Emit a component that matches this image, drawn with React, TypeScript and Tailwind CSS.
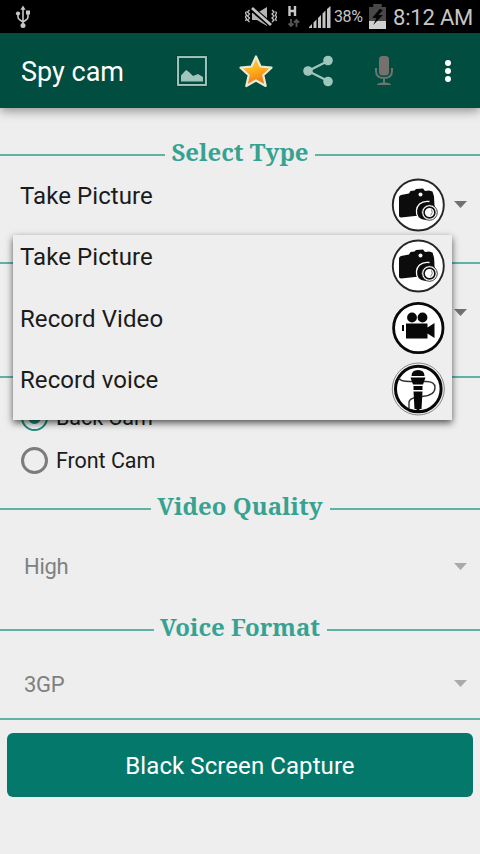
import React from 'react';

const UsbIcon = () => (
  <svg width="16" height="24" viewBox="0 0 16 24" fill="none" stroke="#c6c6c6" strokeWidth="1.6">
    <path d="M8 3v17M3 9v3q0 2 2 3l3 2 3-2q2-1 2-3V8" />
    <circle cx="8" cy="20.500" r="2.500" fill="#c6c6c6" stroke="none" />
    <circle cx="3" cy="8.500" r="2.100" fill="#c6c6c6" stroke="none" />
    <path d="M11 5.500h4v4h-4zM8 0.500l2.600 4.200H5.400z" fill="#c6c6c6" stroke="none" />
  </svg>
);

const MuteIcon = () => (
  <svg width="32" height="22" viewBox="0 0 32 22" fill="none" stroke="#c4c4c4">
    <path d="M7 7h5l10-6v19l-10-6H7z" fill="#b4b4b4" stroke="none" />
    <path d="M6 2l20 17" stroke="#000" strokeWidth="5.500" />
    <path d="M7 2l19 17" strokeWidth="2.800" />
    <path d="M4.500 4l-2 2 2 2-2 2 2 2-2 2 2 2M1.500 5.500L0.500 7l1 2-1 2 1 2-1 2M27 4l2 2-2 2 2 2-2 2 2 2-2 2M30.500 5.500l1 1.500-1 2 1 2-1 2 1 2" strokeWidth="1.300" />
  </svg>
);

const DataIcon = () => (
  <svg width="14" height="24" viewBox="0 0 14 24" fill="none" stroke="#c8c8c8">
    <path d="M2.500 1v10M8 1v10M2 6h6.500" strokeWidth="2.400" />
    <path d="M4 14v7M1.500 18.500L4 21l2.500-2.500M9.500 22v-7M7 17.500L9.500 15l2.500 2.500" stroke="#555" strokeWidth="1.800" />
  </svg>
);

const SignalIcon = () => (
  <svg width="22" height="22" viewBox="0 0 22 22" fill="#c4c4c4">
    <path d="M0 22v-1l3-3v4zM4.500 22v-5.500l3-3V22zM9 22V12l3-3v13zM13.500 22V7.500l3-3V22zM18 22V3l3.500-3v22z" />
  </svg>
);

const BatteryIcon = () => (
  <svg width="17" height="25" viewBox="0 0 16 25" preserveAspectRatio="none">
    <path d="M4 0h8v3h4v22H0V3h4z" fill="#484848" />
    <path d="M0 17h16v8H0z" fill="#d0d0d0" />
    <path d="M10 5L3 14h4l-3 7 9-10H9l4-5z" fill="#050505" />
  </svg>
);

const GalleryIcon = () => (
  <svg width="32" height="32" viewBox="0 0 32 32">
    <rect x="2" y="2" width="28" height="28" fill="none" stroke="#a0c5bd" strokeWidth="2" />
    <rect x="0.700" y="0.700" width="30.600" height="30.600" fill="none" stroke="#063b30" strokeWidth="0.700" />
    <path d="M5 26.500v-6l5-5.500 3 2 4 4 5-2 5 3v4.500z" fill="#a0c5bd" />
  </svg>
);

const StarIcon = () => (
  <svg width="34" height="34" viewBox="0 0 34 34">
    <defs>
      <linearGradient id="star" x1="0" y1="0" x2="0.300" y2="1">
        <stop offset="0" stopColor="#ffd44a" />
        <stop offset="0.500" stopColor="#ffb51c" />
        <stop offset="1" stopColor="#ee7818" />
      </linearGradient>
    </defs>
    <path d="M17 2.500l4.500 10 11 1.200-8.200 7.500 2.400 10.800L17 26.500 7.300 32l2.400-10.800L1.500 13.700l11-1.200z" fill="url(#star)" stroke="#e8ead8" strokeWidth="2.200" strokeLinejoin="round" />
  </svg>
);

const ShareIcon = () => (
  <svg width="30" height="32" viewBox="0 0 30 32" fill="#9fc6bd">
    <path d="M25 6L5 16l20 10" fill="none" stroke="#9fc6bd" strokeWidth="2.200" />
    <circle cx="25" cy="5.500" r="4.800" />
    <circle cx="5" cy="16" r="4.800" />
    <circle cx="25" cy="26.500" r="4.800" />
  </svg>
);

const MicIcon = () => (
  <svg width="20" height="30" viewBox="0 0 20 30" fill="none" stroke="#6b746f" strokeWidth="2">
    <rect x="5" y="0" width="10" height="19.500" rx="3.500" fill="#74716f" stroke="none" />
    <path d="M2 12v3q0 7 8 7t8-7v-3M10 22v5" />
    <path d="M3 29q0-2.500 7-2.500t7 2.500z" fill="#6b746f" stroke="none" />
  </svg>
);

const CameraIcon = () => (
  <svg width="54" height="54" viewBox="0 0 54 54">
    <circle cx="27.300" cy="27" r="25.500" fill="#fff" stroke="#262626" strokeWidth="1.900" />
    <path d="M8 19.500q0-2 2-2.500l8-1.500 1.500-2.500 4-.5 1.500-1.500 7-.5 2 2.500 4-.5 3.500 1 1.500 5q1 10 0 18L24 38 10 39.500q-2 0-2-2z" fill="#0c0c0c" />
    <circle cx="29.500" cy="16.500" r="2" fill="#f5f5f5" />
    <circle cx="34.500" cy="32" r="10" fill="#0c0c0c" />
    <path d="M27 39a10.500 10.500 0 0 1 1.500-13q4-3.500 10-2.500" fill="none" stroke="#fff" strokeWidth="1.300" />
    <circle cx="38.500" cy="34.500" r="7.800" fill="#fff" stroke="#111" strokeWidth="0.800" />
    <circle cx="38.500" cy="34.500" r="5.400" fill="#fff" stroke="#111" strokeWidth="1.600" />
    <path d="M40.500 31.500q2 3-1 6" fill="none" stroke="#777" strokeWidth="1" />
  </svg>
);

const VideoIcon = () => (
  <svg width="54" height="54" viewBox="0 0 54 54">
    <circle cx="27.300" cy="27" r="24.700" fill="#fff" stroke="#080808" strokeWidth="2.800" />
    <g fill="#080808">
      <circle cx="21" cy="16.500" r="4.900" />
      <circle cx="31.500" cy="16.500" r="4.900" />
      <path d="M15 22.500h21.500v4l7-4.500v15l-7-4.500v5H15zM11 24h2v6h-2z" />
    </g>
  </svg>
);

const VoiceIcon = () => (
  <svg width="54" height="54" viewBox="0 0 54 54">
    <circle cx="27.300" cy="27" r="26" fill="#eee" stroke="#888" strokeWidth="1" />
    <circle cx="27.300" cy="27" r="22.800" fill="#fff" stroke="#080808" strokeWidth="3" />
    <path d="M8 16q1 4 13 3.500h14q9 0 9 6 0 8-13 9-13 1-13 6v6" fill="none" stroke="#333" strokeWidth="1.400" />
    <path d="M20.500 14q0-6 6.500-6t6.500 6zM19.500 15.500h15l-2.500 7H22zM22.500 24h9v4h-9zM22.500 29.500h9L30.500 47h-2v2h-3v-2h-2z" fill="#080808" />
  </svg>
);

const Arrow: React.FC<{ className: string }> = ({ className }) => (
  <svg width="13" height="7" viewBox="0 0 13 7" className={className}>
    <path d="M0 0h13L6.500 7z" fill="currentColor" />
  </svg>
);

const Heading: React.FC<{ text: string; width: string }> = ({ text, width }) => (
  <div className="flex h-8 items-center">
    <div className="mt-[6px] h-[2px] flex-1 bg-[#5fb3a5]" />
    <h2 className={`${width} flex shrink-0 justify-center font-['Noto_Serif','DejaVu_Serif_Condensed','DejaVu_Serif',serif] text-[24px] leading-8 font-bold whitespace-nowrap text-[#36a291]`}>
      {text}
    </h2>
    <div className="mt-[6px] h-[2px] flex-1 bg-[#5fb3a5]" />
  </div>
);

const options = [
  { label: 'Take Picture', icon: <CameraIcon /> },
  { label: 'Record Video', icon: <VideoIcon /> },
  { label: 'Record voice', icon: <VoiceIcon /> },
];

const App: React.FC = () => {
  return (
    <div className="relative h-[854px] w-[480px] overflow-hidden bg-[#eeeeee] font-[Roboto,sans-serif] text-[#1b1b1b]">
      <div className="flex h-[33px] items-center bg-black text-[#c6c6c6]">
        <div className="ml-[15px]"><UsbIcon /></div>
        <div className="ml-[214px]"><MuteIcon /></div>
        <div className="ml-[10px]"><DataIcon /></div>
        <div className="ml-[8px]"><SignalIcon /></div>
        <span className="mt-[1px] ml-[3px] w-[30px] text-[16px] tracking-[-0.4px]">38%</span>
        <div className="ml-[5px]"><BatteryIcon /></div>
        <span className="mt-[1px] ml-[7px] text-[22px] tracking-[-0.2px] whitespace-nowrap">8:12 AM</span>
      </div>

      <header className="flex h-[75px] items-center bg-[#014d40] text-white shadow-[0_3px_10px_rgba(0,0,0,0.4)]">
        <h1 className="mt-[4px] ml-[21px] w-[155px] text-[27px]">Spy cam</h1>
        <GalleryIcon />
        <div className="ml-[31px]"><StarIcon /></div>
        <div className="ml-[30px]"><ShareIcon /></div>
        <div className="ml-[41px]"><MicIcon /></div>
        <div className="ml-[51px] flex flex-col gap-[2px]">
          <div className="size-[6px] rounded-full bg-white" />
          <div className="size-[6px] rounded-full bg-white" />
          <div className="size-[6px] rounded-full bg-white" />
        </div>
      </header>

      <main>
        <div className="pt-[28px]"><Heading text="Select Type" width="w-[150px]" /></div>
        <div className="flex h-[94px] items-start pt-[10px] pl-[20px]">
          <span className="w-[371px] pt-[4px] text-[24px] leading-[28px] tracking-[0.08px]">Take Picture</span>
          <CameraIcon />
          <Arrow className="mt-[23px] ml-[9px] text-[#717171]" />
        </div>
        <div className="h-[114px] border-t-2 border-[#5fb3a5] pt-[45px]">
          <Arrow className="ml-[454px] text-[#717171]" />
        </div>
        <div className="h-[114px] border-t-2 border-[#5fb3a5] pt-[25px] pl-[21px] text-[21.5px] tracking-[-0.05px]">
          <div className="flex h-[29px] items-center">
            <span className="flex size-[27px] items-center justify-center rounded-full border-2 border-[#168c7c]">
              <span className="size-[13px] rounded-full bg-[#168c7c]" />
            </span>
            <span className="mt-[2px] ml-[8px]">Back Cam</span>
          </div>
          <div className="mt-[14px] flex h-[29px] items-center">
            <span className="size-[27px] rounded-full border-[3px] border-[#7c7c7c]" />
            <span className="mt-[2px] ml-[8px]">Front Cam</span>
          </div>
        </div>
        <Heading text="Video Quality" width="w-[179px]" />
        <div className="flex h-[89px] items-center pl-[24px] text-[22px] text-[#808080]">
          <span className="w-[430px] tracking-[-0.3px]">High</span>
          <Arrow className="text-[#aaaaaa]" />
        </div>
        <Heading text="Voice Format" width="w-[173px]" />
        <div className="flex h-[77px] items-center border-b-2 border-[#5fb3a5] pt-[5px] pl-[24px] text-[22px] text-[#808080]">
          <span className="mt-[3px] w-[430px] tracking-[-0.3px]">3GP</span>
          <Arrow className="text-[#aaaaaa]" />
        </div>
        <button className="mt-[13px] ml-[7px] block h-[64px] w-[466px] rounded-[6px] bg-[#04796b] pt-[2px] text-[24px] tracking-[0.08px] text-white">
          Black Screen Capture
        </button>
      </main>

      {/* open spinner list */}
      <ul className="absolute top-[235px] left-[13px] h-[185px] w-[439px] bg-[#eeeeee] shadow-[0_3px_7px_rgba(0,0,0,0.65)]">
        {options.map((o) => (
          <li key={o.label} className="flex h-[61.500px] items-start pt-[4px] pl-[7px]">
            <span className="w-[371px] pt-[4px] text-[24px] leading-[28px] tracking-[0.08px]">{o.label}</span>
            {o.icon}
          </li>
        ))}
      </ul>
    </div>
  );
};

export default App;
